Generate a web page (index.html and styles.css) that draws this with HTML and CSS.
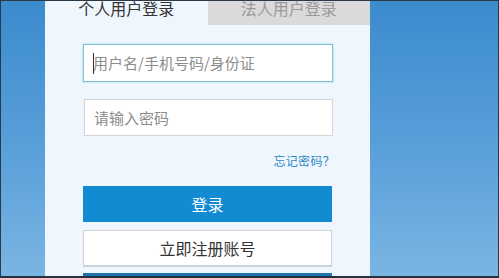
FILE: index.html
```html
<!DOCTYPE html>
<html lang="zh-CN">
<head>
<meta charset="utf-8">
<title>登录</title>
<link rel="stylesheet" href="styles.css">
</head>
<body>
<div class="frame">
  <div class="side side-left"></div>
  <div class="panel">
    <div class="tabs">
      <div class="tab tab-active"><span class="tab-label">个人用户登录</span></div>
      <div class="tab tab-inactive"><span class="tab-label">法人用户登录</span></div>
    </div>
    <div class="form">
      <div class="field field-focus"><span class="caret"></span><span class="ph">用户名/手机号码/身份证</span></div>
      <div class="field field-pass"><span class="ph">请输入密码</span></div>
      <div class="forgot-row"><a class="forgot">忘记密码？</a></div>
      <div class="btn btn-login">登录</div>
      <div class="btn btn-register">立即注册账号</div>
      <div class="btn-next"></div>
    </div>
  </div>
  <div class="side side-right"></div>
</div>
</body>
</html>
```

FILE: styles.css
```css
html, body {
  margin: 0;
  padding: 0;
}
body {
  font-family: "Noto Sans CJK SC", "Noto Sans", sans-serif;
  background: #2a3540;
}
.frame {
  width: 499px;
  height: 278px;
  box-sizing: border-box;
  border-top: 1px solid #2c3946;
  border-left: 1px solid #2c3946;
  border-right: 1px solid #2c3946;
  border-bottom: 2px solid #26323d;
  background: linear-gradient(to bottom, #3b8bcd 0%, #5aa0da 55%, #7ab5e3 100%);
  display: flex;
  overflow: hidden;
}
.side-left {
  width: 44px;
  flex: none;
}
.side-right {
  flex: 1;
}
.panel {
  width: 325px;
  flex: none;
  background: #eff6fd;
  display: flex;
  flex-direction: column;
}
.tabs {
  display: flex;
  height: 24px;
  flex: none;
}
.tab {
  flex: 1;
  display: flex;
  justify-content: center;
  align-items: flex-start;
  overflow: hidden;
}
.tab-label {
  font-size: 16px;
  line-height: 17px;
  margin-top: -1px;
}
.tab-active {
  color: #333333;
}
.tab-inactive {
  background: #dadada;
  color: #9a9a9a;
}
.form {
  padding: 19px 37px 0 38px;
  display: flex;
  flex-direction: column;
}
.field {
  box-sizing: border-box;
  background: #ffffff;
  display: flex;
  align-items: center;
  padding-left: 9px;
  font-size: 15px;
  color: #8c8c8c;
  position: relative;
}
.field-focus {
  height: 38px;
  border: 1px solid #7fc3d6;
  box-shadow: 0 0 2px rgba(110, 185, 210, 0.6);
}
.field-pass {
  height: 37px;
  margin-top: 17px;
  margin-left: 1px;
  border: 1px solid #d4d4d4;
}
.caret {
  position: absolute;
  left: 9px;
  top: 8px;
  width: 1px;
  height: 21px;
  background: #333;
}
.ph {
  line-height: 20px;
}
.forgot-row {
  display: flex;
  justify-content: flex-end;
  margin-top: 17px;
  height: 16px;
  padding-right: 1px;
}
.forgot {
  font-size: 12px;
  line-height: 16px;
  color: #2a8bc9;
  letter-spacing: 0.3px;
  margin-right: -3px;
}
.btn {
  box-sizing: border-box;
  display: flex;
  align-items: center;
  justify-content: center;
  font-size: 16px;
  margin-right: 1px;
}
.btn-login {
  margin-top: 17px;
  height: 36px;
  background: #128bd3;
  color: #ffffff;
}
.btn-register {
  margin-top: 8px;
  height: 37px;
  background: #ffffff;
  color: #333333;
  border: 1px solid #d2d2d2;
  border-bottom: 2px solid #cdd3d9;
}
.btn-next {
  margin-top: 6px;
  margin-right: 1px;
  height: 6px;
  background: #1f74ad;
}
```
